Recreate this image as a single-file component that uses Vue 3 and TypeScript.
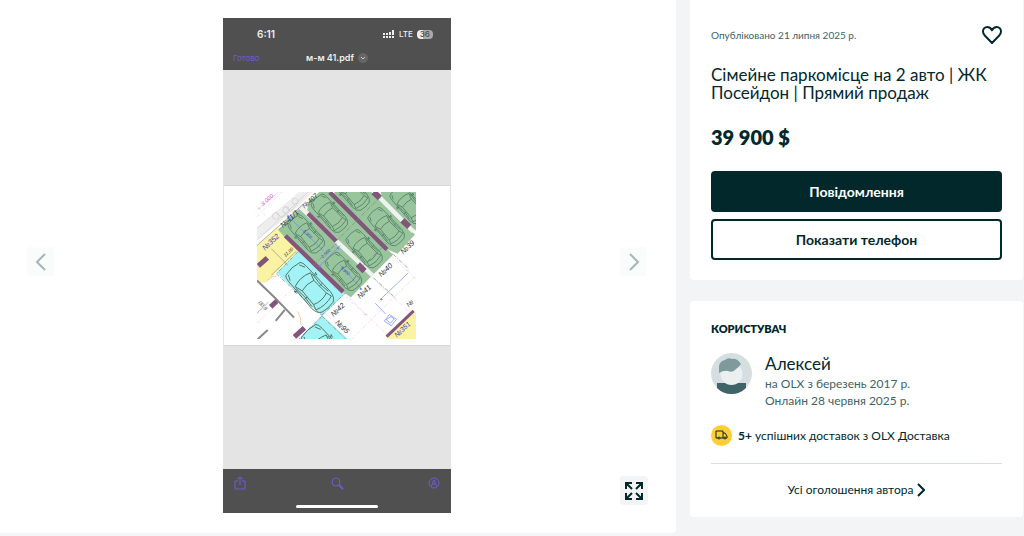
<script setup lang="ts">
import { ref } from 'vue'

interface Car { x: number; y: number; scale: number }
interface Label { text: string; x: number; y: number; angle: number; size: number; blue?: boolean }

const favourite = ref(false)

const cars: Car[] = [
  { x: 195, y: 306, scale: 1.3 },
  { x: 185, y: 146, scale: 1 },
  { x: 296, y: 258, scale: 1 },
  { x: 254, y: 84, scale: 1 },
  { x: 358, y: 190, scale: 1 },
  { x: 319, y: 18, scale: 1 },
  { x: 424, y: 124, scale: 1 },
  { x: 490, y: 58, scale: 1 },
  { x: 242, y: 492, scale: 1.3 },
]

const labels: Label[] = [
  { text: '№39', x: 475, y: 207, angle: -43, size: 22 },
  { text: '№40', x: 409, y: 275, angle: -43, size: 22 },
  { text: '№41', x: 345, y: 340, angle: -43, size: 22 },
  { text: '№42', x: 266, y: 394, angle: -43, size: 22 },
  { text: '№95', x: 270, y: 412, angle: 44, size: 22 },
  { text: '№41/1', x: 115, y: 128, angle: -43, size: 22 },
  { text: '№407', x: 180, y: 70, angle: -43, size: 20 },
  { text: '№', x: 491, y: 366, angle: -43, size: 20 },
  { text: '11,00', x: 122, y: 215, angle: -43, size: 14 },
  { text: '№352', x: 61, y: 196, angle: -43, size: 22, blue: true },
  { text: '№351', x: 456, y: 456, angle: -43, size: 21, blue: true },
  { text: '5,300', x: 174, y: 138, angle: 44, size: 13, blue: true },
  { text: '5,300', x: 286, y: 248, angle: 44, size: 13, blue: true },
  { text: '2,500', x: 234, y: 218, angle: -43, size: 13, blue: true },
]
</script>

<template>
  <div class="page">
    <section class="gallery" aria-label="Фото">
      <button class="nav" type="button" aria-label="Попереднє фото">
        <svg width="14" height="20" viewBox="0 0 14 20"><path d="M11 2 3 10l8 8" /></svg>
      </button>

      <figure class="shot">
        <header class="shot-head">
          <div class="status">
            <span>6:11</span>
            <span class="signals">
              <svg width="12" height="9" viewBox="0 0 12 9" fill="#eee">
                <path d="M0 3h2v2H0zM3 3h2v2H3zM6 2h2v3H6zM9 0h2v5H9zM0 6h2v2H0zM3 6h2v2H3zM6 6h2v2H6zM9 6h2v2H9z" />
              </svg>
              <span class="lte">LTE</span>
              <span class="battery">36</span>
            </span>
          </div>
          <div class="file">
            <span class="done">Готово</span>
            <span class="name">м-м 41.pdf
              <svg width="10" height="10" viewBox="0 0 10 10"><circle cx="5" cy="5" r="5" fill="#666" /><path d="m3 4 2 2 2-2" fill="none" stroke="#ccc" /></svg>
            </span>
            <span></span>
          </div>
        </header>

        <div class="document">
          <div class="sheet">
            <svg class="plan" viewBox="37 20 476 441" role="img" aria-label="План паркінгу">
              <defs>
                <g id="car" fill="none" stroke="#47705f" stroke-width="2">
                  <path d="M-58-22Q-64 0-58 22Q-54 27-42 27L38 29Q56 28 61 17Q65 0 61-17Q56-28 38-29L-42-27Q-54-27-58-22Z" />
                  <path d="M-24-24Q-34 0-24 24L-6 18Q-12 0-6-18ZM35-20Q43 0 35 20L48 24Q56 0 48-24ZM-6-18 35-20M-6 18 35 20" />
                  <path d="M-20-25 12-23 35-26M-20 25 12 23 35 26M12-28v9M12 19v9M-55-17l13-6M-55 17l13 6M-13-27l-4-6 7 2M-13 27l-4 6 7-2" />
                </g>
              </defs>

              <path fill="#fff" d="M37 20h476v441H37z" />
              <path fill="#eeeeef" d="M170 20h34l-70 66-34 30-63 48v-37l54-42z" />
              <g fill="none" stroke="#aaa" stroke-width="1">
                <path d="M37 128 166 20M37 165 190 20M92 80l18 16 20-10M120 62l17 16 20-20" />
                <circle cx="93" cy="92" r="10" /><circle cx="124" cy="74" r="10" /><circle cx="151" cy="48" r="9" />
              </g>

              <path fill="#faf3a4" d="M101 124 162 197 88 267 77 279 66 291 37 292V180z" />
              <path fill="#faf3a4" d="M513 378v83h-82l-8-8z" />
              <path fill="#a2f2f6" d="M163 196 302 323 232 391 96 262z" />
              <path fill="#a2f2f6" d="m232 389 77 72H163z" />
              <g fill="#98c59b">
                <path d="m163 70 209 196 7 7-61 62-18-12L116 151l-15-17z" />
                <path d="m193 48 31-28h30l183 181 8 6-65 65-96-92-84-84-15-13z" />
                <path d="M270 20h109l104 104 27 23-52 58-30-13L263 28z" />
                <path d="M407 20h106v115l-21-13-76-72z" />
              </g>

              <path fill="none" stroke="#eff2ef" stroke-width="13" d="M162 58 383 270M388 20l117 118" />
              <g fill="none" stroke="#84557b">
                <path stroke-width="13" d="M122 151 295 319M190 84l84 83M255 21l171 171" />
                <path stroke-width="18" d="m339 237 20 20M386 20l19 18M472 105l21 19" />
                <path stroke-width="15" d="m41 241 27-24M78 364l21-20M149 454l30-27" />
                <path stroke-width="9" d="m425 453 81-77" />
              </g>

              <g fill="none" stroke="#898989" stroke-width="6">
                <path d="m37 285 55 53 56 58M120 373l-27 33M37 463l32-30" />
                <path stroke-width="2" d="m80 269 75-72M37 180 182 51M80 190l49 49M37 383l34-33" />
              </g>
              <g fill="none" stroke="#6d8a77" stroke-width="2" stroke-dasharray="12 4 3 4">
                <path d="m102 134 60-65M208 237l69-65M273 168l71-71M352 243l77-73M350 90l59-57M160 199 95 265l136 124 69-65M232 392l-70 69M232 392l72 69M445 207l43 40M386 277l65 60" />
              </g>
              <g fill="none" stroke="#e19aca" stroke-width="1" stroke-dasharray="12 4 3 4">
                <path d="M37 94 111 20M37 66l28 28M37 413 272 185M231 388l-75 73M294 319l147 142M320 461 513 270M362 386 253 292M437 209l76 72M380 275l133 123" />
                <path d="m98 253 195 178M170 60l145 131" />
              </g>
              <g fill="none" stroke="#c98bbb" stroke-width="1">
                <path d="m40 66 8 6M51 53l5 6M39 73 101 20M356 387h10M227 387h10M484 254h8" />
              </g>
              <path fill="none" stroke="#efb17c" stroke-width="2" d="M158 377q13 20 11 43M69 284q19-18 27-9" />
              <path fill="none" stroke="#7383f5" stroke-width="2" d="m130 92 106 104M222 243l65-63M285 237l65 74M391 353l31 32M418 407l15-20 22 14-16 19zM424 402l14-9 10 7-12 13zM406 342l83-79" />
              <path stroke="#6680ff" stroke-width="5" d="m128 91 5 3M222 241l5 3M277 187l5 3M345 309l5 3M407 340l5 3" />

              <use v-for="car in cars" :key="`${car.x}-${car.y}`" href="#car" :transform="`translate(${car.x} ${car.y}) rotate(48) scale(${car.scale})`" />
              <g class="plan-text">
                <text v-for="(label, i) in labels" :key="i" :font-size="label.size" :fill="label.blue ? '#363fbd' : '#303034'" :transform="`translate(${label.x} ${label.y}) rotate(${label.angle})`">{{ label.text }}</text>
                <text transform="translate(56 62) rotate(-43)" fill="#dc55c7" font-size="17">3 000</text>
                <text transform="translate(40 352) rotate(48)" fill="#555" font-size="16">00 9</text>
              </g>
            </svg>
          </div>
        </div>

        <footer class="shot-foot">
          <div class="tools">
            <svg width="12" height="14" viewBox="0 0 12 14"><path d="M4 5H1v8h10V5H8M6 9V1M3 3l3-2 3 2" /></svg>
            <svg width="14" height="14" viewBox="0 0 14 14"><circle cx="6" cy="6" r="4" /><path d="m9 9 4 4" stroke-width="2" /></svg>
            <svg width="12" height="12" viewBox="0 0 12 12"><circle cx="6" cy="6" r="5" /><path d="m3 10 3-7 3 7M5 7h2" /></svg>
          </div>
          <div class="home"></div>
        </footer>
      </figure>

      <button class="nav next" type="button" aria-label="Наступне фото">
        <svg width="14" height="20" viewBox="0 0 14 20"><path d="m3 2 8 8-8 8" /></svg>
      </button>
      <button class="expand" type="button" aria-label="На весь екран">
        <svg width="20" height="20" viewBox="0 0 20 20"><path d="M2 8V2h6M2 2l6 6M12 2h6v6M18 2l-6 6M2 12v6h6M2 18l6-6M12 18h6v-6M18 18l-6-6" /></svg>
      </button>
    </section>

    <aside class="side">
      <section class="card offer">
        <div class="meta">
          <span>Опубліковано 21 липня 2025 р.</span>
          <button class="heart" type="button" aria-label="Додати в обране" :aria-pressed="favourite" @click="favourite = !favourite">
            <svg width="20" height="18" viewBox="0 0 20 18"><path d="M10 17 3 9.8C1.5 8.3 1 6.8 1 5.5 1 2.8 3 1 5.3 1 7.5 1 9 2.3 10 4.2 11 2.3 12.5 1 14.7 1 17 1 19 2.8 19 5.5c0 1.3-.5 2.8-2 4.3z" /></svg>
          </button>
        </div>
        <h1>Сімейне паркомісце на 2 авто | ЖК Посейдон | Прямий продаж</h1>
        <p class="price">39 900 $</p>
        <button class="action primary" type="button">Повідомлення</button>
        <button class="action" type="button">Показати телефон</button>
      </section>

      <section class="card seller">
        <h2>КОРИСТУВАЧ</h2>
        <div class="person">
          <svg class="avatar" width="41" height="41" viewBox="0 0 41 41">
            <defs><clipPath id="round"><circle cx="20.5" cy="20.5" r="20.5" /></clipPath></defs>
            <g clip-path="url(#round)">
              <path fill="#d5dfe1" d="M0 0h41v41H0z" />
              <path fill="#406367" d="M6 30h29v11H6z" />
              <circle cx="20.5" cy="21" r="11" fill="#ebeff0" />
              <path fill="#7f999c" d="M8 20v-7q1-5 6-6 3-3 7-1 5-1 9 5-2 3-5 5-3 4-8 2-4-1-9 2z" />
            </g>
          </svg>
          <div>
            <h3>Алексей</h3>
            <p>на OLX з березень 2017 р.</p>
            <p>Онлайн 28 червня 2025 р.</p>
          </div>
        </div>
        <p class="delivery">
          <svg width="21" height="21" viewBox="0 0 21 21"><circle cx="10.5" cy="10.5" r="10.5" fill="#ffce32" /><path d="M7 13H5V6h7v7H9M12 8h2l2 3v2h-1M12 13h1" /><circle cx="8" cy="13" r="1" /><circle cx="14" cy="13" r="1" /></svg>
          <span><strong>5+</strong> успішних доставок з OLX Доставка</span>
        </p>
        <a class="all" href="#">Усі оголошення автора
          <svg width="8" height="14" viewBox="0 0 8 14"><path d="m1 1 6 6-6 6" /></svg>
        </a>
      </section>
    </aside>
  </div>
</template>

<style>
body { margin: 0; background: #f2f4f5; }
</style>

<style scoped>
* { box-sizing: border-box; }
.page {
  display: grid;
  grid-template-columns: minmax(0, 1fr) 333px;
  gap: 14px;
  align-items: start;
  padding-right: 1px;
  color: #02282c;
  font-family: Lato, "Open Sans", sans-serif;
}
h1, h2, h3, p, figure { margin: 0; }
button { padding: 0; border: 0; background: none; font: inherit; color: inherit; cursor: pointer; }
svg { display: block; flex: none; }

.gallery {
  position: relative;
  display: flex;
  align-items: center;
  justify-content: space-between;
  padding: 18px 29px 20px 27px;
  background: #fff;
  border-radius: 0 0 4px 0;
}
.nav {
  display: grid;
  place-items: center;
  width: 27px;
  height: 29px;
  margin-bottom: 8px;
  background: #fafbfb;
  border-radius: 4px;
}
.nav path { fill: none; stroke: #a5b6b8; stroke-width: 2; }
.expand {
  position: absolute;
  right: 28px;
  bottom: 28px;
  display: grid;
  place-items: center;
  width: 28px;
  height: 29px;
  background: #f2f4f5;
  border-radius: 4px;
}
.expand path { fill: none; stroke: #02282c; stroke-width: 2; }

.shot { width: 228px; background: #e4e4e4; font-family: Inter, sans-serif; }
.shot-head { height: 52px; padding: 10px 10px 0; background: #505050; color: #eee; }
.status { display: flex; justify-content: space-between; padding: 0 8px 0 24px; font-size: 10px; line-height: 12px; font-weight: 600; }
.signals { display: flex; align-items: center; gap: 4px; }
.lte { font-size: 8px; font-weight: 500; }
.battery { padding: 0 3px; border-radius: 4px; background: linear-gradient(90deg, #eee 40%, #aaa 40%); color: #555; font-size: 8px; line-height: 9px; }
.file { display: grid; grid-template-columns: 1fr auto 1fr; align-items: center; margin-top: 12px; font-size: 9px; line-height: 12px; }
.done { color: #6f5bd0; font-size: 8px; }
.name { display: flex; align-items: center; gap: 4px; font-weight: 600; }
.document { padding: 115px 1px 123px; }
.sheet { padding: 6px 34px 6px 33px; background: #fff; border: 1px solid #d8d8d8; border-width: 1px 0; }
.plan { width: 100%; height: auto; }
.plan-text { font-family: "Liberation Sans", sans-serif; font-style: italic; }
.shot-foot { height: 44px; padding: 7px 11px 4px; background: #505050; }
.tools { display: flex; align-items: center; justify-content: space-between; height: 14px; }
.tools svg { fill: none; stroke: #6f5bd0; stroke-width: 1; }
.home { width: 82px; height: 3px; margin: 15px auto 0; border-radius: 2px; background: #fff; }

.side { display: grid; gap: 21px; }
.card { padding: 0 21px; background: #fff; border-radius: 0 0 4px 4px; }
.offer { padding-top: 26px; padding-bottom: 20px; }
.meta { display: flex; align-items: center; justify-content: space-between; height: 18px; color: #406367; font-size: 10px; }
.heart path { fill: none; stroke: #02282c; stroke-width: 2; stroke-linejoin: round; }
.heart[aria-pressed="true"] path { fill: #02282c; }
h1 { margin-top: 22px; font-size: 17px; line-height: 18px; font-weight: 400; }
.price { margin-top: 22px; font-size: 20px; line-height: 26px; font-weight: 800; }
.action { display: block; width: 100%; height: 41px; margin-top: 7px; border: 2px solid #02282c; border-radius: 4px; font-size: 14px; font-weight: 700; }
.primary { margin-top: 21px; background: #02282c; color: #fff; }
.seller { padding-top: 20px; padding-bottom: 18px; border-radius: 4px; }
h2 { font-size: 11px; line-height: 16px; font-weight: 800; }
.person { display: flex; gap: 13px; margin-top: 16px; }
h3 { font-size: 17px; line-height: 22px; font-weight: 400; }
.person p { color: #406367; font-size: 12px; line-height: 17px; }
.delivery { display: flex; align-items: center; gap: 6px; margin-top: 16px; padding-bottom: 17px; border-bottom: 1px solid #d8dfe0; font-size: 12px; line-height: 20px; }
.delivery path, .delivery circle + path ~ circle { fill: none; stroke: #02282c; stroke-width: 1; }
.all { display: flex; align-items: center; justify-content: center; gap: 4px; margin-top: 17px; color: inherit; font-size: 12px; line-height: 18px; text-decoration: none; }
.all path { fill: none; stroke: #02282c; stroke-width: 2; }
</style>
